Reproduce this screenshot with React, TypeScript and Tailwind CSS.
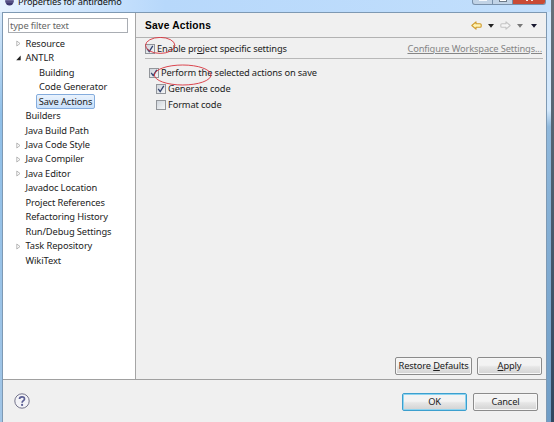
import React from "react";

type Row = { label: string; level?: number; arrow?: "open" | "closed"; selected?: boolean };

const rows: Row[] = [
  { label: "Resource", arrow: "closed" },
  { label: "ANTLR", arrow: "open" },
  { label: "Building", level: 1 },
  { label: "Code Generator", level: 1 },
  { label: "Save Actions", level: 1, selected: true },
  { label: "Builders" },
  { label: "Java Build Path" },
  { label: "Java Code Style", arrow: "closed" },
  { label: "Java Compiler", arrow: "closed" },
  { label: "Java Editor", arrow: "closed" },
  { label: "Javadoc Location" },
  { label: "Project References" },
  { label: "Refactoring History" },
  { label: "Run/Debug Settings" },
  { label: "Task Repository", arrow: "closed" },
  { label: "WikiText" },
];

function TreeRow({ row }: { row: Row }) {
  return (
    <div className="flex h-[14.47px] items-center">
      <span className="flex w-[21px] shrink-0 justify-center pl-[7px]">
        {row.arrow === "closed" && (
          <svg width="5" height="7" viewBox="0 0 5 7"><path d="M.8 1v5L4 3.5z" fill="#fff" stroke="#a5a5a5" strokeWidth=".8" /></svg>
        )}
        {row.arrow === "open" && (
          <svg width="5" height="6" viewBox="0 0 5 6"><path d="M4.7.6v4.7H.2z" fill="#222" /></svg>
        )}
      </span>
      <span
        className={
          row.selected
            ? "ml-[11px] flex h-[15px] w-[59px] shrink-0 items-center justify-center rounded-[2px] border border-[#84acdd] bg-gradient-to-b from-[#eaf3fd] to-[#c7dffa]"
            : row.level
              ? "ml-[14px]"
              : "ml-[0.5px]"
        }
      >
        {row.label}
      </span>
    </div>
  );
}

function Check({ checked }: { checked?: boolean }) {
  return (
    <span className="flex size-[10px] shrink-0 items-center justify-center border border-[#92959a] bg-gradient-to-br from-[#cfd5dc] to-[#f5f6f7]">
      {checked && (
        <svg width="8" height="8" viewBox="0 0 8 8"><path d="M1.2 3.8 3.2 6.6 6.8.8" fill="none" stroke="#34436f" strokeWidth="1.3" /></svg>
      )}
    </span>
  );
}

function Caret({ color }: { color: string }) {
  return <svg width="6" height="4" viewBox="0 0 6 4"><path d="M0 0h6L3 3.7z" fill={color} /></svg>;
}

function Arrow({ stroke, fill, flip }: { stroke: string; fill: string; flip?: boolean }) {
  return (
    <svg width="11" height="9" viewBox="0 0 11 9" className={flip ? "-scale-x-100" : ""}>
      <path d="M.8 4.5 5 .8v2h4.2q1 0 1 1v1.4q0 1-1 1H5v2z" fill={fill} stroke={stroke} strokeWidth="1.1" strokeLinejoin="round" />
    </svg>
  );
}

function Button({ children, className }: { children: React.ReactNode; className: string }) {
  return (
    <button className={`flex h-[18px] shrink-0 items-center justify-center rounded-[2px] border bg-gradient-to-b from-[#f3f3f3] from-45% via-[#e6e6e6] via-55% to-[#d2d2d2] ${className}`}>
      <span>{children}</span>
    </button>
  );
}

export default function App() {
  return (
    <div className="flex h-[422px] w-[554px] overflow-hidden bg-[#f0f0f0] font-['Noto_Sans',sans-serif] text-[9.3px] leading-[14px] tracking-[-0.14px] whitespace-nowrap text-[#222]">
      <div className="flex w-[551px] shrink-0 flex-col bg-[#bddcfb]">
        <header className="flex h-[12px] shrink-0 items-start justify-between overflow-hidden bg-gradient-to-r from-[#e6f2ff] via-[#b7d8fb] via-30% to-[#c2dffc] pl-[5px]">
          <div className="flex items-start">
            <svg width="9" height="6" viewBox="0 0 9 6"><circle cx="4.5" cy="1.2" r="4.2" fill="#3c3870" /><path d="M.5.5h8M.6 2h7.8" stroke="#9c98c4" strokeWidth=".5" /></svg>
            <span className="-mt-[5px] ml-[4px] text-[9.2px] tracking-[-0.14px] text-[#111]">Properties for antirdemo</span>
          </div>
          <div className="mr-[5px] flex h-[5px] w-[74px] overflow-hidden rounded-b-[3px] border border-t-0 border-[#7890aa] bg-[#c1d3e6]">
            <span className="flex w-[20px] justify-center border-r border-[#7890aa]"><i className="h-[1px] w-[8px] bg-[#f5f8fc]" /></span>
            <span className="flex w-[20px] justify-center border-r border-[#7890aa]"><i className="h-[2px] w-[8px] border border-t-0 border-[#6d7a88] bg-white" /></span>
            <span className="flex flex-1 justify-center gap-[3px] bg-[#c94b35]"><i className="h-[1px] w-[2px] bg-[#f5e4df]" /><i className="h-[1px] w-[2px] bg-[#f5e4df]" /></span>
          </div>
        </header>
        <div className="flex min-h-0 flex-1">
          <div className="w-[2px] shrink-0 bg-gradient-to-b from-[#d7e9fb] via-[#8fbfe8] via-25% to-[#a1c5e6]" />
          <div className="flex w-[545px] shrink-0 flex-col border-x border-t border-[#7e99b3] bg-[#f0f0f0]">
            <div className="flex h-[367px] shrink-0 border-b border-[#a0a0a0]">
              <aside className="w-[133px] shrink-0 border-r border-[#a5a5a5] bg-white pt-[5px]">
                <div className="ml-[5px] flex h-[15px] w-[120px] items-center border border-[#a9adb3] pl-[1px] text-[#666]"><span>type filter text</span></div>
                <div className="mt-[3.5px] pl-[1px] tracking-[-0.1px]">{rows.map((row) => <TreeRow key={row.label} row={row} />)}</div>
              </aside>
              <main className="flex flex-1 flex-col">
                <div className="flex h-[25px] shrink-0 items-center border-b border-[#b2b2b2] pt-[1px] pl-[9px] pr-[9px]">
                  <h1 className="flex-1 font-['Liberation_Sans',sans-serif] text-[10.2px] font-bold tracking-[.2px] text-black">Save Actions</h1>
                  <Arrow stroke="#cf9a2c" fill="#fff4b5" />
                  <span className="ml-[6px] flex"><Caret color="#222" /></span>
                  <span className="ml-[6px] flex"><Arrow stroke="#c4c4c4" fill="#f5f5f5" flip /></span>
                  <span className="ml-[6px] flex"><Caret color="#777" /></span>
                  <span className="ml-[8px] flex"><Caret color="#18182f" /></span>
                </div>
                <div className="mr-[3px] ml-[9px] flex h-[21px] shrink-0 items-center border-b border-[#b8b8b8]">
                  <div className="relative flex items-center pt-[1px]">
                    <Check checked />
                    <span className="ml-[2px]">Enable pr<u>o</u>ject specific settings</span>
                    <svg className="absolute -top-[4px] left-0" width="32" height="18" viewBox="0 0 32 18"><ellipse cx="15.2" cy="8.4" rx="14.7" ry="8" fill="none" stroke="#d8323c" strokeWidth=".9" /></svg>
                  </div>
                  <a className="mr-[1px] ml-auto pt-[1px] text-[#858585] underline">Configure Workspace Settings...</a>
                </div>
                <div className="flex flex-1 flex-col pt-[6px] pl-[13px]">
                  <div className="relative flex h-[16px] items-center">
                    <Check checked />
                    <span className="ml-[2px]">Perform the selected actions on save</span>
                    <svg className="absolute -top-[1px] left-[4px]" width="60" height="22" viewBox="0 0 60 22"><ellipse cx="29.7" cy="11" rx="28.3" ry="10" fill="none" stroke="#d8323c" strokeWidth=".9" /></svg>
                  </div>
                  <div className="ml-[7px] flex h-[16px] items-center gap-[2px]"><Check checked /><span className="tracking-[-0.1px]">Generate code</span></div>
                  <div className="ml-[7px] flex h-[16px] items-center gap-[2px]"><Check /><span>Format code</span></div>
                  <div className="mt-auto mr-[4px] mb-[4px] flex justify-end gap-[5px]">
                    <Button className="w-[77px] border-[#8b8b8b] shadow-[inset_0_0_0_1px_#f7f7f7]">Restore <u>D</u>efaults</Button>
                    <Button className="w-[65px] border-[#8b8b8b] shadow-[inset_0_0_0_1px_#f7f7f7]"><u>A</u>pply</Button>
                  </div>
                </div>
              </main>
            </div>
            <footer className="flex flex-1 items-center pt-[1px] pr-[8px] pl-[11px]">
              <svg width="16" height="16" viewBox="0 0 16 16" className="-mt-[2px]"><circle cx="8" cy="8" r="7.2" fill="#f3f3f7" stroke="#74748b" /><path d="M5.5 6.1C5.5 3.2 10.5 3 10.5 5.9 10.5 7.6 8.1 7.7 8.1 9.8" fill="none" stroke="#5b5f94" strokeWidth="1.7" /><circle cx="8.1" cy="11.9" r="1.1" fill="#5b5f94" /></svg>
              <div className="ml-auto flex gap-[6px]">
                <Button className="w-[65px] border-[#3c9fce] shadow-[inset_0_0_0_1px_#8ed4f0]">OK</Button>
                <Button className="w-[65px] border-[#8b8b8b] shadow-[inset_0_0_0_1px_#f7f7f7]">Cancel</Button>
              </div>
            </footer>
          </div>
          <div className="flex-1 bg-gradient-to-b from-[#d3e8fc] from-24% via-[#8fb8dc] via-28% to-[#6f9dc6]" />
        </div>
      </div>
      <div className="w-[3px] bg-gradient-to-b from-[#66717a] to-[#30475f]" />
    </div>
  );
}
